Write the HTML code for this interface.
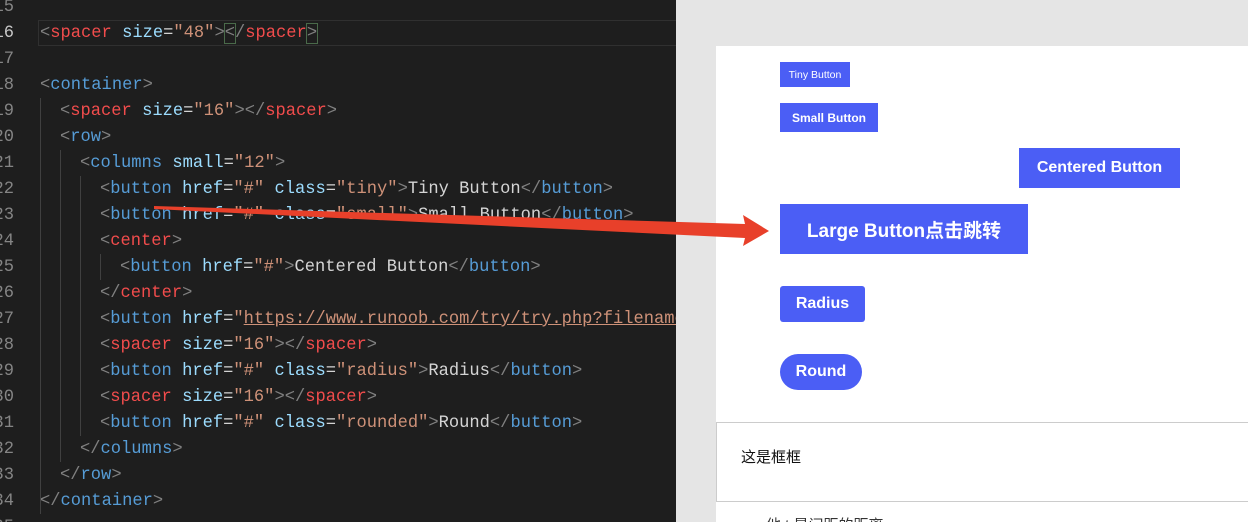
<!DOCTYPE html>
<html><head><meta charset="utf-8"><style>
*{margin:0;padding:0;box-sizing:border-box}
html{width:1248px;height:522px;overflow:hidden;background:#1e1e1e}
body{width:1248px;height:522px;overflow:hidden;position:relative;background:#1e1e1e;font-family:"Liberation Sans","Noto Sans CJK SC",sans-serif}
#ed{position:absolute;left:0;top:0;width:676px;height:522px;background:#1e1e1e;overflow:hidden}
.ln{position:absolute;left:-20px;width:34px;text-align:right;font:17.1px/26px "Liberation Mono","DejaVu Sans Mono",monospace;color:#858585}
.cl{position:absolute;white-space:pre;font:17.1px/26px "Liberation Mono","DejaVu Sans Mono",monospace;color:#d4d4d4}
.p{color:#808080}.b{color:#569cd6}.r{color:#f14c4c}.a{color:#9cdcfe}.s{color:#ce9178}.t{color:#d4d4d4}
.g{position:absolute;width:1px;background:#404040}
#rt{position:absolute;left:676px;top:0;width:572px;height:522px;background:#e5e5e5}
#pn{position:absolute;left:716px;top:46px;width:532px;height:476px;background:#fff;overflow:hidden}
.btn{position:absolute;background:#4b5ef5;color:#fff;font-weight:bold;display:flex;align-items:center;justify-content:center;white-space:nowrap}
</style></head><body>
<div id="ed">
<div style="position:absolute;left:38px;top:20px;width:640px;height:26px;border:1px solid #303030;border-right:none"></div>
<div class="g" style="left:40px;top:98px;height:416px"></div>
<div class="g" style="left:60px;top:150px;height:312px"></div>
<div class="g" style="left:80px;top:176px;height:260px"></div>
<div class="g" style="left:100px;top:254px;height:26px"></div>
<div style="position:absolute;top:1px;left:0;width:676px;height:522px">
<div class="ln" style="top:-6px">15</div>
<div class="ln" style="top:20px;color:#c6c6c6">16</div>
<div class="ln" style="top:46px">17</div>
<div class="ln" style="top:72px">18</div>
<div class="ln" style="top:98px">19</div>
<div class="ln" style="top:124px">20</div>
<div class="ln" style="top:150px">21</div>
<div class="ln" style="top:176px">22</div>
<div class="ln" style="top:202px">23</div>
<div class="ln" style="top:228px">24</div>
<div class="ln" style="top:254px">25</div>
<div class="ln" style="top:280px">26</div>
<div class="ln" style="top:306px">27</div>
<div class="ln" style="top:332px">28</div>
<div class="ln" style="top:358px">29</div>
<div class="ln" style="top:384px">30</div>
<div class="ln" style="top:410px">31</div>
<div class="ln" style="top:436px">32</div>
<div class="ln" style="top:462px">33</div>
<div class="ln" style="top:488px">34</div>
<div class="ln" style="top:514px">35</div>

<div class="cl" style="left:40px;top:20px"><span class="p">&lt;</span><span class="r">spacer</span> <span class="a">size</span><span class="t">=</span><span class="s">"48"</span><span class="p">&gt;</span><span class="p" style="outline:1px solid #4a6a4a">&lt;</span><span class="p">/</span><span class="r">spacer</span><span class="p" style="outline:1px solid #4a6a4a">&gt;</span></div>
<div class="cl" style="left:40px;top:72px"><span class="p">&lt;</span><span class="b">container</span><span class="p">&gt;</span></div>
<div class="cl" style="left:60px;top:98px"><span class="p">&lt;</span><span class="r">spacer</span> <span class="a">size</span>=<span class="s">"16"</span><span class="p">&gt;&lt;/</span><span class="r">spacer</span><span class="p">&gt;</span></div>
<div class="cl" style="left:60px;top:124px"><span class="p">&lt;</span><span class="b">row</span><span class="p">&gt;</span></div>
<div class="cl" style="left:80px;top:150px"><span class="p">&lt;</span><span class="b">columns</span> <span class="a">small</span>=<span class="s">"12"</span><span class="p">&gt;</span></div>
<div class="cl" style="left:100px;top:176px"><span class="p">&lt;</span><span class="b">button</span> <span class="a">href</span>=<span class="s">"#"</span> <span class="a">class</span>=<span class="s">"tiny"</span><span class="p">&gt;</span>Tiny Button<span class="p">&lt;/</span><span class="b">button</span><span class="p">&gt;</span></div>
<div class="cl" style="left:100px;top:202px"><span class="p">&lt;</span><span class="b">button</span> <span class="a">href</span>=<span class="s">"#"</span> <span class="a">class</span>=<span class="s">"small"</span><span class="p">&gt;</span>Small Button<span class="p">&lt;/</span><span class="b">button</span><span class="p">&gt;</span></div>
<div class="cl" style="left:100px;top:228px"><span class="p">&lt;</span><span class="r">center</span><span class="p">&gt;</span></div>
<div class="cl" style="left:120px;top:254px"><span class="p">&lt;</span><span class="b">button</span> <span class="a">href</span>=<span class="s">"#"</span><span class="p">&gt;</span>Centered Button<span class="p">&lt;/</span><span class="b">button</span><span class="p">&gt;</span></div>
<div class="cl" style="left:100px;top:280px"><span class="p">&lt;/</span><span class="r">center</span><span class="p">&gt;</span></div>
<div class="cl" style="left:100px;top:306px"><span class="p">&lt;</span><span class="b">button</span> <span class="a">href</span>=<span class="s">"<span style="text-decoration:underline">https://www.runoob.com/try/try.php?filename=</span></span></div>
<div class="cl" style="left:100px;top:332px"><span class="p">&lt;</span><span class="r">spacer</span> <span class="a">size</span>=<span class="s">"16"</span><span class="p">&gt;&lt;/</span><span class="r">spacer</span><span class="p">&gt;</span></div>
<div class="cl" style="left:100px;top:358px"><span class="p">&lt;</span><span class="b">button</span> <span class="a">href</span>=<span class="s">"#"</span> <span class="a">class</span>=<span class="s">"radius"</span><span class="p">&gt;</span>Radius<span class="p">&lt;/</span><span class="b">button</span><span class="p">&gt;</span></div>
<div class="cl" style="left:100px;top:384px"><span class="p">&lt;</span><span class="r">spacer</span> <span class="a">size</span>=<span class="s">"16"</span><span class="p">&gt;&lt;/</span><span class="r">spacer</span><span class="p">&gt;</span></div>
<div class="cl" style="left:100px;top:410px"><span class="p">&lt;</span><span class="b">button</span> <span class="a">href</span>=<span class="s">"#"</span> <span class="a">class</span>=<span class="s">"rounded"</span><span class="p">&gt;</span>Round<span class="p">&lt;/</span><span class="b">button</span><span class="p">&gt;</span></div>
<div class="cl" style="left:80px;top:436px"><span class="p">&lt;/</span><span class="b">columns</span><span class="p">&gt;</span></div>
<div class="cl" style="left:60px;top:462px"><span class="p">&lt;/</span><span class="b">row</span><span class="p">&gt;</span></div>
<div class="cl" style="left:40px;top:488px"><span class="p">&lt;/</span><span class="b">container</span><span class="p">&gt;</span></div>
</div>
</div>

<div id="rt"></div>
<div id="pn">
<div style="position:absolute;left:0;top:376px;width:532px;height:80px;border-top:1px solid #ccc;border-bottom:1px solid #ccc;border-left:1px solid #ccc"></div>
<div style="position:absolute;left:25px;top:400px;font-size:15px;color:#111">这是框框</div>
<div style="position:absolute;left:50px;top:468px;font-size:15px;color:#333">他 t 是间距的距离</div>
</div>

<div class="btn" style="left:780px;top:62px;width:70px;height:25px;font-size:10.5px;font-weight:normal">Tiny Button</div>
<div class="btn" style="left:780px;top:103px;width:98px;height:29px;font-size:12px">Small Button</div>
<div class="btn" style="left:1019px;top:148px;width:161px;height:40px;font-size:16px">Centered Button</div>
<div class="btn" style="left:780px;top:204px;width:248px;height:50px;font-size:19px">Large Button点击跳转</div>
<div class="btn" style="left:780px;top:286px;width:85px;height:36px;font-size:16px;border-radius:3px">Radius</div>
<div class="btn" style="left:780px;top:354px;width:82px;height:36px;font-size:16px;border-radius:18px">Round</div>

<svg style="position:absolute;left:0;top:0" width="1248" height="522">
<polygon points="154,206 745,224 743,215 769,231 743,246 745,238 154,209" fill="#e8402a"/>
</svg>
</body></html>
